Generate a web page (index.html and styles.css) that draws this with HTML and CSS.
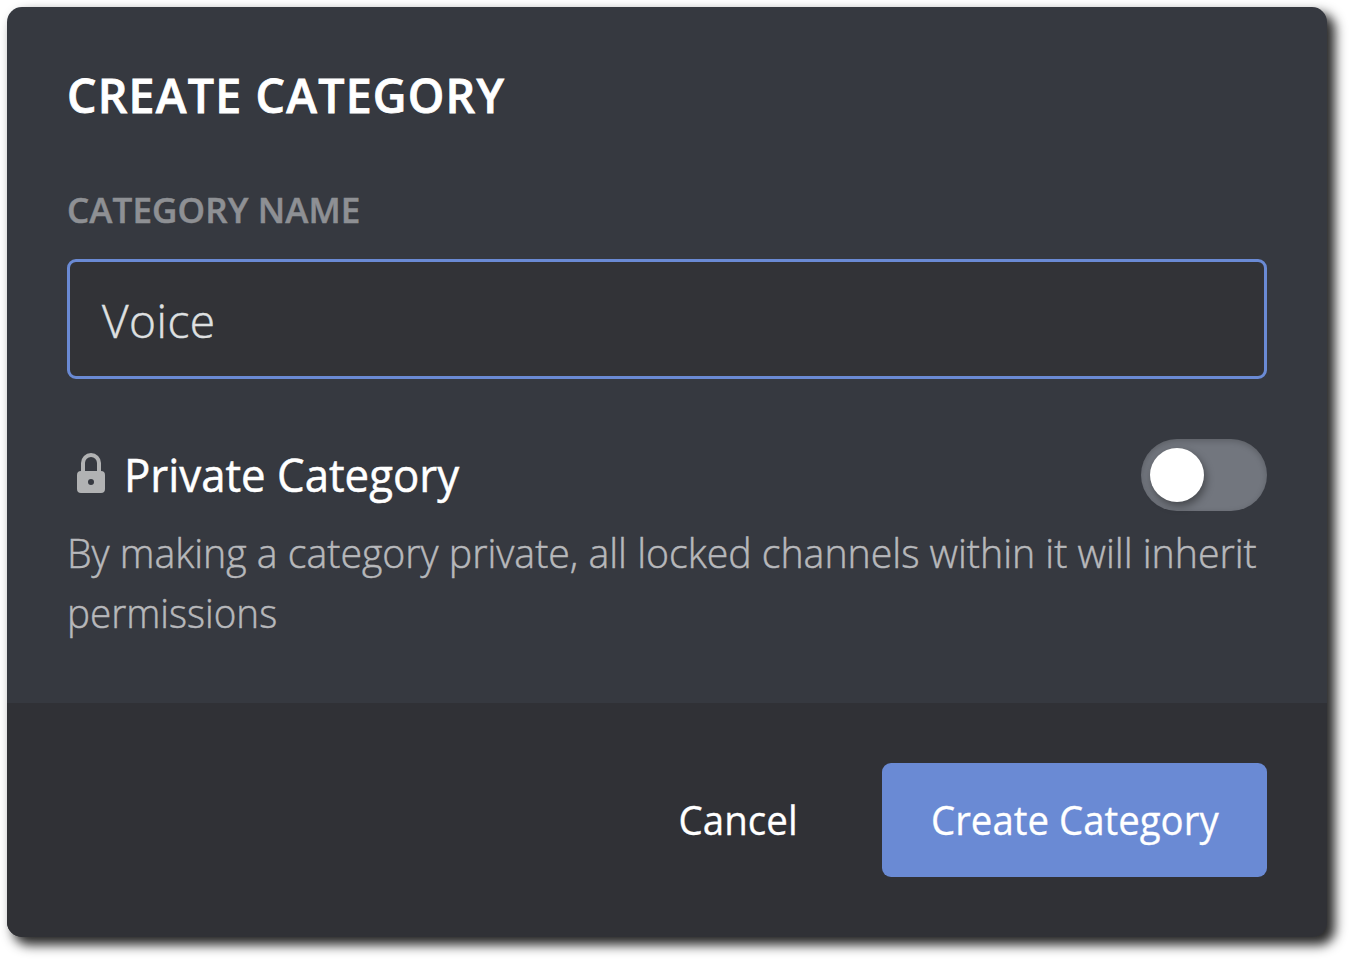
FILE: index.html
```html
<!DOCTYPE html>
<html lang="en">
<head>
<meta charset="utf-8">
<title>Create Category</title>
<link rel="stylesheet" href="styles.css">
</head>
<body>
<form class="modal">
  <div class="content">
    <h1 class="title"><span>CREATE CATEGORY</span></h1>
    <div class="label"><span>CATEGORY NAME</span></div>
    <div class="field"><span>Voice</span></div>
    <div class="setting">
      <svg class="lock" width="28" height="40" viewBox="0 0 28 40">
        <path fill="none" stroke="#b1b2b3" stroke-width="4" d="M6 20V10a8 8 0 0 1 16 0v10"/>
        <path fill="#b1b2b3" fill-rule="evenodd" d="M4 18h20a4 4 0 0 1 4 4v14a4 4 0 0 1-4 4H4a4 4 0 0 1-4-4V22a4 4 0 0 1 4-4zm10 8a3 3 0 1 0 0 6 3 3 0 0 0 0-6z"/>
      </svg>
      <div class="name"><span>Private Category</span></div>
      <div class="toggle"><div class="knob"></div></div>
    </div>
    <p class="description"><span class="line-one">By making a category private, all locked channels within it will inherit</span><br><span class="line-two">permissions</span></p>
  </div>
  <div class="footer">
    <div class="cancel"><span>Cancel</span></div>
    <div class="create"><span>Create Category</span></div>
  </div>
</form>
</body>
</html>
```
FILE: styles.css
```css
* { box-sizing: border-box; }
body {
  margin: 0;
  padding: 7px;
  height: 960px;
  overflow: hidden;
  background: #fff;
  color: #fff;
  font-family: "Open Sans", "Noto Sans", sans-serif;
  white-space: nowrap;
}
.modal {
  display: flex;
  flex-direction: column;
  width: 1320px;
  height: 930px;
  border-radius: 15px;
  overflow: hidden;
  background: #363940;
  box-shadow: 7px 7px 12px 1px rgba(0, 0, 0, .85);
}
.content { height: 696px; padding: 60px; }
.title { margin: 0; height: 60px; font-size: 46.5px; line-height: 56px; font-weight: 600; letter-spacing: 1.2px; -webkit-text-stroke: .8px; }
.label { margin-top: 60px; height: 48px; font-size: 35px; line-height: 46px; font-weight: 600; letter-spacing: .1px; color: #8e9094; -webkit-text-stroke: .5px; }
.field {
  margin-top: 24px;
  height: 120px;
  padding-left: 32px;
  border: 3px solid #6a8ad4;
  border-radius: 9px;
  background: #323337;
  color: #dfe0e1;
  font-size: 46px;
  line-height: 116px;
  font-weight: 300;
  letter-spacing: .5px;
  -webkit-text-stroke: .5px;
}
.setting { display: flex; align-items: center; height: 72px; margin-top: 60px; }
.lock { margin: -4px 19px 0 10px; }
.name { font-size: 46px; line-height: 70px; height: 72px; font-weight: 400; -webkit-text-stroke: .5px; }
.name span, .description span, .cancel span, .create span { display: inline-block; transform-origin: left; }
.name span { transform: scaleX(.952); }
.toggle {
  width: 126px;
  height: 72px;
  margin-left: auto;
  padding: 9px;
  border-radius: 36px;
  background: #72767e;
  box-shadow: inset 0 2px 6px rgba(0, 0, 0, .2);
}
.knob { width: 54px; height: 54px; border-radius: 50%; background: #fff; box-shadow: 2px 4px 9px rgba(0, 0, 0, .4); }
.description { margin: 12px 0 0; font-size: 40px; line-height: 60px; font-weight: 300; color: #b7b8bb; -webkit-text-stroke: .5px; }
.description .line-one { transform: scaleX(.981); }
.description .line-two { transform: scaleX(.965); }
.footer {
  display: flex;
  flex: 1;
  justify-content: flex-end;
  padding: 60px;
  background: #303136;
  font-size: 40px;
  line-height: 114px;
  font-weight: 400;
  -webkit-text-stroke: .3px;
}
.cancel { margin-right: 84px; }
.cancel span { transform: scaleX(.963); transform-origin: right; }
.create { width: 385px; height: 114px; border-radius: 9px; background: #6a8ad4; text-align: center; }
.create span { transform: scaleX(.96); transform-origin: center; }
```
